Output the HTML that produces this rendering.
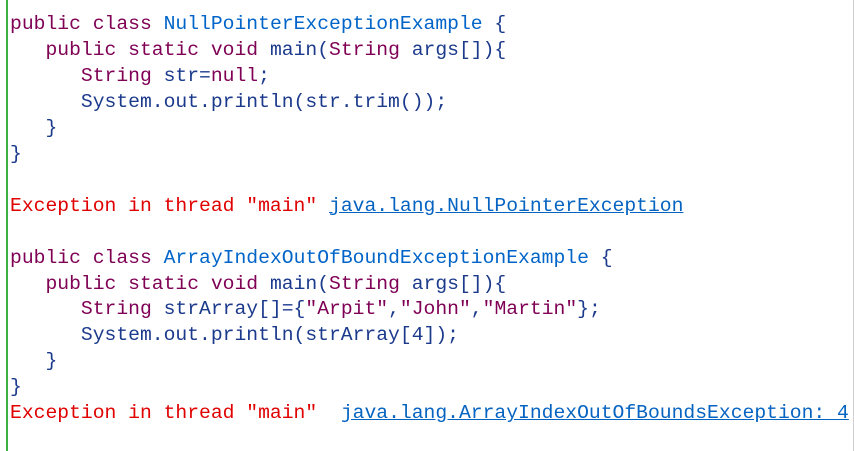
<!DOCTYPE html>
<html><head><meta charset="utf-8"><style>
html,body{margin:0;padding:0;background:#fff;width:854px;height:451px;overflow:hidden}
.wrap{position:absolute;left:6px;top:0;width:845px;height:451px;border-left:2px solid #3cb043;border-right:1px solid #d0d0d0}
pre{margin:0;position:absolute;left:2px;top:12px;font-family:"Liberation Mono",monospace;font-size:19.7px;line-height:25.95px;color:#1b3a8c}
.k{color:#7f0055}.c{color:#0064c8}.r{color:#e00000}.l{color:#0563c1;text-decoration:underline}
</style></head><body><div class="wrap"><pre><span class="k">public class</span> <span class="c">NullPointerExceptionExample</span> {
   <span class="k">public static void</span> main(<span class="k">String</span> args[]){
      <span class="k">String</span> str=<span class="k">null</span>;
      System.out.println(str.trim());
   }
}

<span class="r">Exception in thread "main" </span><span class="l">java.lang.NullPointerException</span>

<span class="k">public class</span> <span class="c">ArrayIndexOutOfBoundExceptionExample</span> {
   <span class="k">public static void</span> main(<span class="k">String</span> args[]){
      <span class="k">String</span> strArray[]={<span class="k">"Arpit"</span>,<span class="k">"John"</span>,<span class="k">"Martin"</span>};
      System.out.println(strArray[4]);
   }
}
<span class="r">Exception in thread "main"  </span><span class="l">java.lang.ArrayIndexOutOfBoundsException: 4</span></pre></div></body></html>
